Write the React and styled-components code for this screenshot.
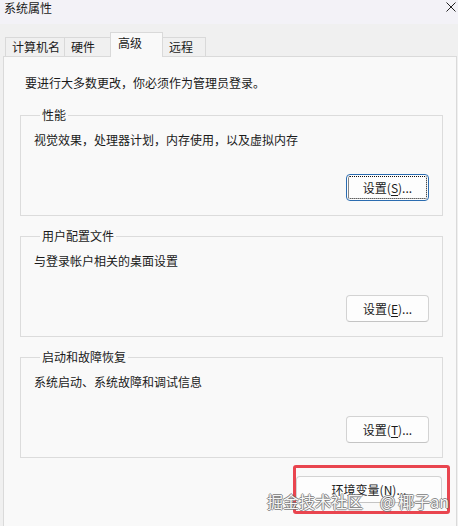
import React from "react";
import styled, { createGlobalStyle } from "styled-components";

const GlobalStyle = createGlobalStyle`
  html, body {
    margin: 0;
    padding: 0;
    background: #f0f0f0;
  }
  body {
    font-family: "Noto Sans CJK SC", "Noto Sans", sans-serif;
    font-size: 12px;
    color: #1a1a1a;
  }
`;

const Window = styled.div`
  position: relative;
  width: 458px;
  height: 526px;
  overflow: hidden;
  background: #f0f0f0;
  display: flex;
  flex-direction: column;
`;

const TitleBar = styled.div`
  height: 24px;
  flex: none;
  display: flex;
  align-items: flex-start;
  justify-content: space-between;
  padding: 0 2px 0 4px;
  background: #f3f2f7;
  box-sizing: border-box;
`;

const Title = styled.span`
  font-size: 12px;
  line-height: 16px;
  color: #1a1a1a;
`;

const CloseIcon = styled.svg`
  margin-top: 2px;
  width: 10px;
  height: 10px;
`;

const TabStrip = styled.div`
  height: 32px;
  flex: none;
  display: flex;
  align-items: flex-end;
  padding-left: 5px;
  position: relative;
  z-index: 1;
`;

const Tab = styled.div`
  box-sizing: border-box;
  width: ${(p) => p.$width}px;
  height: ${(p) => (p.$active ? 25 : 19)}px;
  margin-bottom: ${(p) => (p.$active ? -1 : 0)}px;
  margin-left: -1px;
  padding-left: ${(p) => (p.$active ? 7 : 6)}px;
  border: 1px solid #d9d9d9;
  border-bottom: none;
  background: ${(p) => (p.$active ? "#f9f9f9" : "#f0f0f0")};
  line-height: ${(p) => (p.$active ? 20 : 17)}px;
  font-size: 12px;
  color: #1a1a1a;
  white-space: nowrap;
  &:first-child {
    margin-left: 0;
  }
`;

const Panel = styled.div`
  flex: 1;
  margin-left: 3px;
  margin-right: 1px;
  border: 1px solid #dadada;
  border-bottom: none;
  background: #f9f9f9;
  padding: 18px 13px 0 16px;
  display: flex;
  flex-direction: column;
`;

const Intro = styled.div`
  line-height: 16px;
  padding-left: 5px;
  margin-bottom: 16px;
`;

const Groups = styled.div`
  display: flex;
  flex-direction: column;
  gap: 12px;
`;

const Group = styled.fieldset`
  margin: 0;
  border: 1px solid #dcdcdc;
  padding: 9px 13px 14px 13px;
  display: flex;
  flex-direction: column;
`;

const Legend = styled.legend`
  padding: 0 2px;
  margin-left: 6px;
  line-height: 16px;
  font-size: 12px;
  color: #1a1a1a;
`;

const Description = styled.div`
  line-height: 16px;
`;

const ButtonRow = styled.div`
  display: flex;
  justify-content: flex-end;
  margin-top: 26px;
`;

const Button = styled.button`
  box-sizing: border-box;
  width: ${(p) => p.$width || 83}px;
  height: 27px;
  padding: 0;
  border-radius: 4px;
  border: 1px solid ${(p) => (p.$focused ? "#2b6cb0" : "#d3d3d3")};
  border-bottom-color: ${(p) => (p.$focused ? "#2b6cb0" : "#c4c4c4")};
  background: #fdfdfd;
  font-family: inherit;
  font-size: 12px;
  color: #1a1a1a;
  display: flex;
  align-items: center;
  justify-content: center;
  outline: ${(p) => (p.$focused ? "1px dotted #111" : "none")};
  outline-offset: -3px;
  u {
    text-decoration: underline;
    text-underline-offset: 2px;
  }
`;

const Footer = styled.div`
  display: flex;
  justify-content: flex-end;
  margin-top: 7px;
  margin-right: -7px;
`;

const Highlight = styled.div`
  border: 3px solid #e9454f;
  border-radius: 3px;
  padding: 8px 5px 8px 0;
`;

const Watermark = styled.div`
  position: absolute;
  left: 267px;
  top: 490px;
  font-size: 16px;
  line-height: 22px;
  color: #f7f7f7;
  white-space: nowrap;
  text-shadow: 1px 0 0 rgba(110, 110, 110, 0.75), -1px 0 0 rgba(110, 110, 110, 0.75),
    0 1px 0 rgba(110, 110, 110, 0.75), 0 -1px 0 rgba(110, 110, 110, 0.75);
  pointer-events: none;
`;

const Gap = styled.span`
  display: inline-block;
  width: ${(p) => p.$w}px;
`;

const groups = [
  {
    title: "性能",
    text: "视觉效果，处理器计划，内存使用，以及虚拟内存",
    key: "S",
    focused: true,
  },
  { title: "用户配置文件", text: "与登录帐户相关的桌面设置", key: "E" },
  { title: "启动和故障恢复", text: "系统启动、系统故障和调试信息", key: "T" },
];

const tabs = [
  { label: "计算机名", width: 60 },
  { label: "硬件", width: 47 },
  { label: "高级", width: 53, active: true },
  { label: "远程", width: 44 },
];

export default function App() {
  return (
    <>
      <GlobalStyle />
      <Window>
        <TitleBar>
          <Title>系统属性</Title>
          <CloseIcon viewBox="0 0 10 10">
            <path d="M0.5 0.5 L9.5 9.5 M9.5 0.5 L0.5 9.5" stroke="#222" strokeWidth="1" />
          </CloseIcon>
        </TitleBar>

        <TabStrip>
          {tabs.map((t) => (
            <Tab key={t.label} $width={t.width} $active={t.active}>
              {t.label}
            </Tab>
          ))}
        </TabStrip>

        <Panel>
          <Intro>要进行大多数更改，你必须作为管理员登录。</Intro>

          <Groups>
            {groups.map((g) => (
              <Group key={g.title}>
                <Legend>{g.title}</Legend>
                <Description>{g.text}</Description>
                <ButtonRow>
                  <Button $focused={g.focused}>
                    设置(<u>{g.key}</u>)...
                  </Button>
                </ButtonRow>
              </Group>
            ))}
          </Groups>

          <Footer>
            <Highlight>
              <Button $width={146}>
                环境变量(<u>N</u>)...
              </Button>
            </Highlight>
          </Footer>
        </Panel>

        <Watermark>
          掘金技术社区<Gap $w={17} />@<Gap $w={3} />椰子an
        </Watermark>
      </Window>
    </>
  );
}
